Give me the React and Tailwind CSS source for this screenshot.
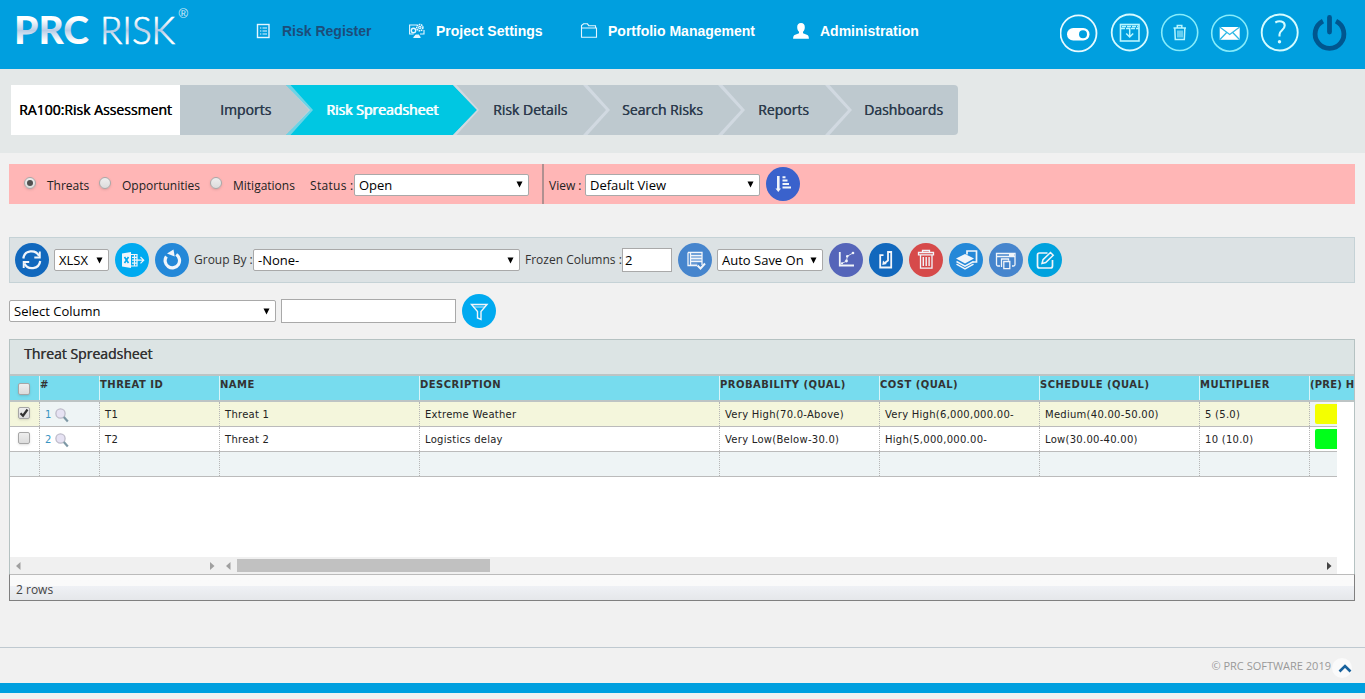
const mainMenu = [
  { label: "Risk Register", icon: "list", active: true, width: "w-[154px]" },
  { label: "Project Settings", icon: "settings", width: "w-[172px]" },
  { label: "Portfolio Management", icon: "folder", width: "w-[212px]" },
  { label: "Administration", icon: "user", width: "w-[130px]" },
];

const steps = [
  { label: "Imports", box: "w-[106px] pl-[40px]" },
  { label: "Risk Spreadsheet", box: "w-[167px] pl-[40px]", active: true },
  { label: "Risk Details", box: "w-[130px] pl-[40px]" },
  { label: "Search Risks", box: "w-[135px] pl-[39px]" },
  { label: "Reports", box: "w-[107px] pl-[40px]" },
  { label: "Dashboards", box: "w-[133px] pl-[39px]", last: true },
];

const columns = [
  { key: "id", label: "THREAT ID", width: "w-[120px]" },
  { key: "name", label: "NAME", width: "w-[200px]" },
  { key: "description", label: "DESCRIPTION", width: "w-[300px]" },
  { key: "probability", label: "PROBABILITY (QUAL)", width: "w-[160px]" },
  { key: "cost", label: "COST (QUAL)", width: "w-[160px]" },
  { key: "schedule", label: "SCHEDULE (QUAL)", width: "w-[160px]" },
  { key: "multiplier", label: "MULTIPLIER", width: "w-[110px]" },
];

const rows = [
  {
    num: 1,
    checked: true,
    id: "T1",
    name: "Threat 1",
    description: "Extreme Weather",
    probability: "Very High(70.0-Above)",
    cost: "Very High(6,000,000.00-",
    schedule: "Medium(40.00-50.00)",
    multiplier: "5 (5.0)",
    score: "bg-[#f4ff00]",
  },
  {
    num: 2,
    id: "T2",
    name: "Threat 2",
    description: "Logistics delay",
    probability: "Very Low(Below-30.0)",
    cost: "High(5,000,000.00-",
    schedule: "Low(30.00-40.00)",
    multiplier: "10 (10.0)",
    score: "bg-[#00ff1a]",
  },
];

function Logo() {
  return (
    <svg width="190" height="60" className="shrink-0">
      <defs>
        <linearGradient id="silver" gradientUnits="userSpaceOnUse" x1="0" y1="17" x2="0" y2="44">
          <stop offset="0.1" stopColor="#ffffff" />
          <stop offset="0.5" stopColor="#b9cde6" />
          <stop offset="0.9" stopColor="#ffffff" />
        </linearGradient>
      </defs>
      <g fill="url(#silver)" stroke="url(#silver)" fontFamily="Lato, sans-serif" fontSize="38">
        <text x="14" y="44" fontWeight="900" strokeWidth="0" textLength="75" lengthAdjust="spacingAndGlyphs">
          PRC
        </text>
        <text x="100" y="44" fontWeight="300" strokeWidth="0.7" textLength="75" lengthAdjust="spacingAndGlyphs">
          RISK
        </text>
      </g>
      <text x="178.5" y="17.5" fill="#d5ecf8" fontFamily="Liberation Sans, sans-serif" fontSize="13">
        ®
      </text>
    </svg>
  );
}

function MenuIcon({ name }) {
  return (
    <svg width="18" height="18" viewBox="0 0 18 18" fill="none" stroke="#e4f6ff" strokeWidth="1.1" className="shrink-0">
      {name === "list" && (
        <>
          <rect x="3.5" y="2.5" width="11.5" height="13" strokeWidth="1.4" />
          <path d="M6 6h1.3M8.5 6H13M6 9h1.3M8.5 9H13M6 12h1.3M8.5 12H13" />
        </>
      )}
      {name === "settings" && (
        <>
          <path d="M9 3H1.6v9h4M16 8v4h-4M6 15.5h6M7 13.5h4" />
          <circle cx="5.5" cy="8.5" r="2.2" strokeWidth="1.4" />
          <circle cx="11.8" cy="5.6" r="3.1" strokeDasharray="1.6 0.6" strokeWidth="1.5" />
          <circle cx="11.8" cy="5.6" r="1.2" />
          <path d="M6 15.3h6l-1.5-2.3H8z" fill="#e4f6ff" />
        </>
      )}
      {name === "folder" && (
        <path d="M1.5 6.2V3.6L3.6 1.8h3.8l1.4 1.9h6.7V6M1.5 6h15v9.2h-15z" />
      )}
      {name === "user" && (
        <path
          fill="#fff"
          stroke="none"
          d="M9 1c2.6 0 3.9 1.8 3.8 4.2 0 2-.8 3.6-1.8 4.6v1.5l4.4 1.8c1 .5 1.4 1.6 1.5 3.7H1.1c.1-2.1.5-3.2 1.5-3.7L7 11.3V9.8C6 8.8 5.2 7.2 5.2 5.2 5.1 2.8 6.4 1 9 1z"
        />
      )}
    </svg>
  );
}

function HeaderActions() {
  const ring = { width: 40, height: 42, viewBox: "0 0 40 42", fill: "none" };
  return (
    <div className="flex gap-[10px]">
      <svg {...ring}>
        <circle cx="18.5" cy="20.3" r="18" stroke="#e8faff" strokeWidth="1.8" />
        <rect x="7" y="15" width="22.5" height="12.5" rx="6.25" fill="#fff" />
        <circle cx="23" cy="21.25" r="4" fill="#009fdf" />
      </svg>
      <svg {...ring} stroke="#b8f6ff">
        <circle cx="19.7" cy="19.5" r="18" stroke="#d5faff" strokeWidth="1.8" />
        <rect x="10.5" y="11.5" width="18.5" height="16.5" strokeWidth="1.6" />
        <path d="M11 15.5h18M12 13.5h16" strokeWidth="1.3" strokeDasharray="4 1" />
        <path d="M19.7 15v8.5M16.2 20.5l3.5 3.5 3.5-3.5" strokeWidth="1.5" />
      </svg>
      <svg {...ring} stroke="#b8f6ff">
        <circle cx="19.7" cy="19.5" r="18" stroke="#86ecfb" strokeWidth="1.6" />
        <path d="M13.5 15H26M17.3 14.5v-2h4.5v2M14.8 15.5l.5 11h9l.5-11" strokeWidth="1.5" />
        <path d="M18 17.5v7M20 17.5v7M22 17.5v7" strokeWidth="1.1" />
      </svg>
      <svg {...ring}>
        <circle cx="19.7" cy="20.2" r="18" stroke="#86ecfb" strokeWidth="1.6" />
        <rect x="9.7" y="14" width="20" height="12.8" fill="#fff" />
        <path d="M9.7 14l10 7.5 10-7.5M9.7 26.8l7-7.3M29.7 26.8l-7-7.3" stroke="#2fb9e6" strokeWidth="1.3" />
      </svg>
      <svg {...ring} stroke="#d5fcff">
        <circle cx="19.7" cy="19.5" r="18" strokeWidth="1.9" />
        <path d="M15.3 9.5c4-2.3 9.4-1.2 9.4 3.1 0 4.7-5.2 4.7-5.2 9v2" strokeWidth="2.1" />
        <circle cx="19.5" cy="28.7" r="1.7" fill="#d5fcff" stroke="none" />
      </svg>
      <svg {...ring} stroke="#00568f" strokeLinecap="round">
        <path d="M13 8.2a14.4 14.4 0 1 0 13 0" strokeWidth="4.8" strokeLinecap="butt" />
        <path d="M19.5 4.5v14.5" strokeWidth="4.8" />
      </svg>
    </div>
  );
}

function Header() {
  return (
    <header className="flex h-[69px] shrink-0 bg-[#009fdf]">
      <Logo />
      <nav className="flex pl-[64px] pt-[22px]">
        {mainMenu.map((item) => (
          <a
            key={item.label}
            className={`flex h-[18px] items-center gap-[10px] whitespace-nowrap font-['Liberation_Sans',sans-serif] text-[14px] font-bold ${item.width} ${
              item.active ? "text-[#1c4d7a]" : "text-white"
            }`}
          >
            <MenuIcon name={item.icon} />
            <span className="pt-px">{item.label}</span>
          </a>
        ))}
      </nav>
      <div className="ml-auto pr-[15px] pt-[13px]">
        <HeaderActions />
      </div>
    </header>
  );
}

function StepBar() {
  return (
    <section className="flex h-[84px] shrink-0 bg-[#e4e8e8] pl-[11px] pt-4">
      <div className="flex h-[50px] w-[169px] items-center bg-white pl-2 text-sm whitespace-nowrap text-black [text-shadow:0.4px_0_0_currentColor]">
        RA100:Risk Assessment
      </div>
      {steps.map((step) => (
        <div
          key={step.label}
          className={`relative flex h-[50px] items-center text-sm whitespace-nowrap ${step.box} ${
            step.active
              ? "bg-[#00c7e2] text-white [text-shadow:0.9px_0_0_currentColor]"
              : "bg-[#bec9cf] text-[#2c3a4c] [text-shadow:0.4px_0_0_currentColor]"
          } ${step.last ? "rounded-r" : ""}`}
        >
          {step.label}
          {!step.last && (
            <svg width="28" height="50" className="absolute top-0 left-full z-10">
              <path d="M0 0L24 25 0 50z" fill={step.active ? "#00c7e2" : "#bec9cf"} />
              <path
                d={step.active ? "M0 0h3.5L26 25 3.5 50H0L24 25z" : "M0 0h4.5L27 25 4.5 50H0L23 25z"}
                fill="#d9e0e8"
                fillOpacity={step.label === "Imports" ? 0.5 : 0.7}
              />
            </svg>
          )}
        </div>
      ))}
    </section>
  );
}

function Select({ value, className }) {
  return (
    <div
      className={`flex h-[22px] items-center justify-between rounded-[2px] border border-[#a9a9a9] bg-white pr-[5px] pl-[4px] text-[13px] whitespace-nowrap text-black ${className}`}
    >
      <span className="pt-[2px]">{value}</span>
      <svg width="7" height="7">
        <path d="M0.5 0.5h6L3.5 6.5z" fill="#000" />
      </svg>
    </div>
  );
}

function Radio({ checked }) {
  return (
    <span className="mb-1 flex size-[12px] shrink-0 items-center justify-center rounded-full border border-[#a8a8a8] bg-gradient-to-b from-[#eeeeee] to-[#dcdcdc] shadow-sm">
      {checked && <span className="size-[6px] rounded-full bg-[#505050]" />}
    </span>
  );
}

function Checkbox({ checked }) {
  return (
    <span className="block size-[12px] rounded-[2px] border border-[#a6a6a6] bg-gradient-to-b from-[#eeeeee] to-[#dcdcdc] shadow-sm">
      {checked && (
        <svg width="10" height="10" fill="none" stroke="#333" strokeWidth="2.2">
          <path d="M1.5 5.2l2.5 2.5L8.5 1.5" />
        </svg>
      )}
    </span>
  );
}

// 34px round toolbar button, the drawing uses the same 34 unit grid
function RoundButton({ color, className = "", children }) {
  return (
    <button className={`size-[34px] shrink-0 rounded-full ${color} ${className}`}>
      <svg width="34" height="34" viewBox="0 0 34 34" fill="none" stroke="#f1f5fa" strokeWidth="1.5">
        {children}
      </svg>
    </button>
  );
}

function FilterBar() {
  return (
    <section className="mr-[10px] ml-[9px] flex h-10 items-center bg-[#ffb6b6] pt-px text-[12px] text-[#222]">
      <div className="flex w-[533px] shrink-0 items-center pl-[15px]">
        <Radio checked />
        <span className="w-[63px] shrink-0 pt-[2px] pl-[11px]">Threats</span>
        <Radio />
        <span className="w-[99px] shrink-0 pt-[2px] pl-[11px]">Opportunities</span>
        <Radio />
        <span className="w-[88px] shrink-0 pt-[2px] pl-[11px]">Mitigations</span>
        <span className="w-[44px] shrink-0 pt-[2px] tracking-[0.3px] whitespace-nowrap">Status :</span>
        <Select value="Open" className="w-[175px] shrink-0" />
      </div>
      <div className="-mt-px h-10 w-[2px] bg-[#b09090]" />
      <span className="mr-[4px] ml-[5px] w-[32px] pt-[2px] whitespace-nowrap">View :</span>
      <Select value="Default View" className="w-[175px]" />
      <RoundButton color="bg-[#3a62cc]" className="mb-[1px] ml-[6px]">
        <path d="M12.3 9v13" strokeWidth="2.6" />
        <path d="M9.5 21.5h5.5L12.3 25z" fill="#f1f5fa" stroke="none" />
        <path d="M16.5 10.3h3M16.5 13.5h5M16.5 17h6.5M16.5 20.5h8.5" strokeWidth="2" />
      </RoundButton>
    </section>
  );
}

function Toolbar() {
  return (
    <section className="mt-[33px] mr-[10px] ml-[9px] flex h-[46px] items-center border border-[#c5d2d6] bg-[#dce2e4] pl-[5px] text-[12px] text-[#333]">
      <RoundButton color="bg-[#1168bd]">
        <path d="M8.3 15.5c1-8.5 12.5-9.5 15.7-2.5M25.2 18c-1 8.5-12.5 9.5-15.7 2.5" strokeWidth="2.2" />
        <path d="M24.8 8.5v6h-5.5M8.7 25v-6h5.5" strokeWidth="1.9" />
      </RoundButton>
      <Select value="XLSX" className="ml-[5px] w-[55px]" />
      <RoundButton color="bg-[#00aaf0]" className="ml-[6px]">
        <path d="M7 10.5l9-1.5v16l-9-1.5z" fill="#f1f5fa" stroke="none" />
        <path d="M9.5 14l4 6M13.5 14l-4 6" stroke="#00aaf0" strokeWidth="1.6" />
        <path d="M16 11.5h6V23h-6M17 14.3h5M17 17.2h5M17 20.1h5M19.5 11.5V23" strokeWidth="1.2" />
        <path d="M22 17.2h6M25.5 14l3.2 3.2-3.2 3.2" strokeWidth="1.2" />
      </RoundButton>
      <RoundButton color="bg-[#2488d8]" className="ml-[6px]">
        <path d="M21.2 11.5a7.2 7.2 0 1 1-9.800 2" strokeWidth="3.2" />
        <path d="M12 10.5L18.5 6.5l1.2 7z" fill="#f1f5fa" stroke="none" />
      </RoundButton>
      <span className="ml-[5px] w-[59px] whitespace-nowrap">Group By :</span>
      <Select value="-None-" className="w-[267px] pl-[3px]" />
      <span className="ml-[5px] w-[97px] whitespace-nowrap">Frozen Columns :</span>
      <div className="flex h-6 w-[50px] items-center border border-[#a9a9a9] bg-white pt-px pl-[2px] text-[13px] text-black">2</div>
      <RoundButton color="bg-[#4685cd]" className="ml-[6px]">
        <path d="M10 9.5h14V22M10 9.5v13h9M12.5 9.5v13M12.5 12.5H24M12.5 15.5H24M12.5 18.5H24" strokeWidth="1.3" />
        <path d="M12.5 21.2h7M12.5 14h11M12.5 17h11" strokeWidth="1" strokeOpacity="0.6" />
        <path d="M19.5 22.5l3 3 4.5-5" strokeWidth="2" />
      </RoundButton>
      <Select value="Auto Save On" className="ml-[5px] w-[106px]" />
      <RoundButton color="bg-[#5565b9]" className="ml-[6px]">
        <path d="M10.8 9v13.5H25" strokeWidth="1.8" />
        <path d="M12.5 20.5l5-2.3.8-5 5.7-3.2" strokeWidth="1" strokeOpacity="0.8" />
        <g fill="#f1f5fa" stroke="none">
          <circle cx="13" cy="20.3" r="1.1" />
          <circle cx="17.5" cy="18" r="1.4" />
          <circle cx="18.2" cy="13.2" r="1.2" />
          <circle cx="24" cy="10" r="1.3" />
        </g>
      </RoundButton>
      <RoundButton color="bg-[#1168bd]" className="ml-[6px]">
        <path d="M14.5 12.2h-3.3v12.3h11V9H19v8.5l-3.2 2.5" strokeWidth="1.8" />
        <path d="M13.3 22l.7-4.5 3.8 3.5z" fill="#f1f5fa" stroke="none" />
      </RoundButton>
      <RoundButton color="bg-[#d64a4a]" className="ml-[6px]">
        <path d="M9.5 9.5h15v2.3h-15zM13.5 9.3V7.5h7v1.8M11.5 12.5v12.7h11.5V12.5" strokeWidth="1.3" />
        <path d="M14.3 14v9M17.2 14v9M20.1 14v9" strokeWidth="1.4" />
      </RoundButton>
      <RoundButton color="bg-[#2488d8]" className="ml-[6px]">
        <path d="M18 11.5V8h9.5v11H24" strokeWidth="1.7" />
        <path d="M16 11l9 4.5-9 5-9-5z" fill="#f1f5fa" stroke="none" />
        <path d="M7.5 18.5l8.5 4.7 8.5-4.7M7.5 21.2l8.5 4.8 8.5-4.8" strokeWidth="1.5" />
      </RoundButton>
      <RoundButton color="bg-[#4685cd]" className="ml-[6px]">
        <path d="M11 23H9a1.5 1.5 0 0 1-1.5-1.5V10.5h18.5v11a1.5 1.5 0 0 1-1.5 1.5H23M7.5 13.5H26M20 12h5" strokeWidth="1.3" />
        <path d="M12.5 24v-8h7v1.5M14.8 18.5h6v7.2h-6z" strokeWidth="1.3" />
      </RoundButton>
      <RoundButton color="bg-[#00a2de]" className="ml-[5px]">
        <path d="M19.5 10h-8a2 2 0 0 0-2 2v11a2 2 0 0 0 2 2h11a2 2 0 0 0 2-2v-6" strokeWidth="1.7" />
        <path d="M14 20.5l1-3.8 7.5-7.2 2.7 2.7-7.5 7.3z" strokeWidth="1.5" />
      </RoundButton>
    </section>
  );
}

function ColumnFilter() {
  return (
    <section className="mt-[11px] flex h-[34px] items-center pl-[9px]">
      <Select value="Select Column" className="w-[267px]" />
      <div className="ml-[5px] h-6 w-[175px] border border-[#a9a9a9] bg-white" />
      <RoundButton color="bg-[#00aaf0]" className="ml-[6px]">
        <path d="M9.5 10.5h15.5l-6 7v8l-3.5-1.5v-6.5z" strokeWidth="1.4" />
        <path d="M11 13h12" strokeWidth="0.8" />
      </RoundButton>
    </section>
  );
}

function Magnifier() {
  return (
    <svg width="15" height="15" fill="none">
      <circle cx="5.500" cy="5.5" r="4.6" fill="#e6e2f3" stroke="#bdbbc9" strokeWidth="1.3" />
      <path d="M8.8 9L12.8 13.5" stroke="#7d98a5" strokeWidth="2.2" />
    </svg>
  );
}

const cell = "h-full shrink-0 overflow-hidden border-r border-dotted border-[#b5b5b5]";

function Row({ row }) {
  const bg = !row ? "bg-[#eef4f5]" : row.checked ? "bg-[#f4f6dc]" : "bg-white";
  const plainBg = row && !row.checked ? "bg-white" : "bg-[#eef4f5]";
  return (
    <div className={`flex h-[25px] w-[1327px] items-stretch overflow-hidden border-b border-[#bbbbbb] ${bg}`}>
      <div className={`${cell} w-[30px] pt-[5px] pl-2`}>{row && <Checkbox checked={row.checked} />}</div>
      <div className={`${cell} flex w-[60px] items-center gap-[3px] pl-[5px] text-[#3794c2] ${plainBg}`}>
        {row && (
          <>
            <span>{row.num}</span>
            <span className="pt-[3px]">
              <Magnifier />
            </span>
          </>
        )}
      </div>
      {columns.map((col) => (
        <div key={col.key} className={`${cell} flex items-center pl-[5px] whitespace-nowrap ${col.width}`}>
          {row && row[col.key]}
        </div>
      ))}
      <div className={`flex-1 pt-[2px] pl-[5px] ${plainBg}`}>
        {row && <div className={`h-[20px] w-[60px] rounded-[2px] ${row.score}`} />}
      </div>
    </div>
  );
}

function Arrow({ right, dark, className }) {
  return (
    <svg width="5" height="8" className={`shrink-0 ${className}`}>
      <path d={right ? "M0 0L4.5 4 0 8z" : "M4.5 0L0 4l4.5 4z"} fill={dark ? "#444" : "#a0a0a0"} />
    </svg>
  );
}

function Spreadsheet() {
  return (
    <section className="mt-[11px] mr-[10px] ml-[9px]">
      <div className="h-[235px] border border-b-0 border-[#b5c2c2] bg-white">
        <h2 className="h-[34px] bg-[#dce4e4] pt-[4px] pl-[14px] text-sm text-[#333] [text-shadow:0.4px_0_0_currentColor]">
          Threat Spreadsheet
        </h2>
        <div className="flex h-[28px] border-t-2 border-b-2 border-[#bdc4c4] bg-[#77dcee] font-['DejaVu_Sans',sans-serif] text-[10px] font-bold whitespace-nowrap text-[#333]">
          <div className="w-[30px] shrink-0 border-r border-white/70 pt-[7px] pl-2">
            <Checkbox />
          </div>
          <div className="w-[60px] shrink-0 border-r border-white/70 pt-px">#</div>
          {columns.map((col) => (
            <div key={col.key} className={`shrink-0 border-r border-white/70 pt-px tracking-[0.47px] ${col.width}`}>
              {col.label}
            </div>
          ))}
          <div className="w-[44px] pt-px tracking-[0.2px]">(PRE) H</div>
        </div>
        <div className="h-[155px] font-['DejaVu_Sans',sans-serif] text-[10px] tracking-[0.27px] text-[#222]">
          {rows.map((row) => (
            <Row key={row.num} row={row} />
          ))}
          <Row />
        </div>
        <div className="flex h-[17px] w-[1327px] items-center bg-[#f0f0f0]">
          <Arrow className="ml-[6px]" />
          <Arrow right className="ml-[189px]" />
          <Arrow className="ml-[11px]" />
          <div className="ml-[6px] h-[13px] w-[253px] bg-[#c1c1c1]" />
          <Arrow right dark className="mr-[5px] ml-auto" />
        </div>
      </div>
      <div className="h-[27px] border border-[#808080] border-t-[#bbbbbb] bg-gradient-to-b from-[#fafafa] from-45% via-[#eff1f5] via-45% to-[#e5e7ea] pt-[6px] pl-[6px] text-[12px] text-[#444]">
        2 rows
      </div>
    </section>
  );
}

function Footer() {
  return (
    <footer className="mt-auto">
      <div className="flex h-[36px] items-center justify-end border-t border-[#bfc9d0] pr-[13px] text-[11px] text-[#999]">
        <span className="pt-px">© PRC SOFTWARE 2019</span>
        <span className="mt-[4px] ml-px flex size-[20px] items-center justify-end rounded-full bg-[#fafafa]">
          <svg width="14" height="10" fill="none" stroke="#17619d" strokeWidth="2.6" className="shrink-0">
            <path d="M1.5 8.5l5.5-5.5 5.5 5.5" />
          </svg>
        </span>
      </div>
      <div className="h-[10px] bg-[#009fdf]" />
      <div className="h-[6px]" />
    </footer>
  );
}

export default function App() {
  return (
    <div className="flex h-[699px] w-[1365px] flex-col overflow-hidden bg-[#f1f1f1] font-['Open_Sans',sans-serif]">
      <Header />
      <StepBar />
      <main className="pt-[11px]">
        <FilterBar />
        <Toolbar />
        <ColumnFilter />
        <Spreadsheet />
      </main>
      <Footer />
    </div>
  );
}
